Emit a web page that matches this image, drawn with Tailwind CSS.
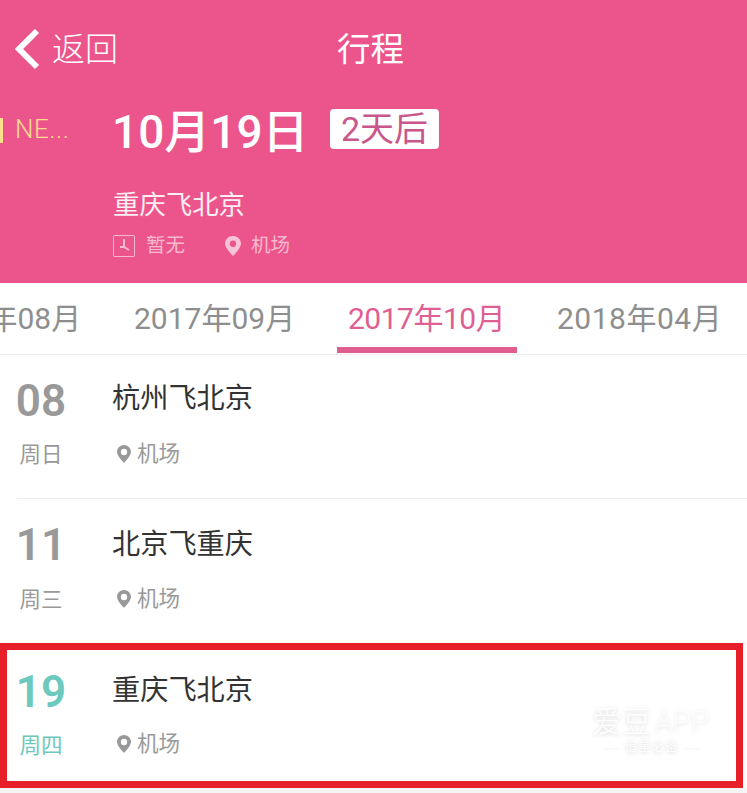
<!DOCTYPE html>
<html lang="zh-CN">

<head>
    <meta charset="UTF-8" />
    <meta name="viewport" content="width=device-width, initial-scale=1.0" />
    <title>行程</title>
    <script src="https://cdn.jsdelivr.net/npm/@tailwindcss/browser@4"></script>
</head>

<body class="relative bg-white h-[793px] w-[747px] overflow-hidden font-['Roboto','Noto_Sans_CJK_SC',sans-serif]">

    <!-- header -->
    <header class="bg-[#ec558b] h-[283px] text-white">
        <div class="relative flex items-center h-[98px]">
            <svg class="ml-[14px] w-[26px] h-[44px]" viewBox="0 0 26 44" fill="none">
                <path d="M23 4 L5 22 L23 40" stroke="white" stroke-width="6" />
            </svg>
            <span class="ml-[12px] mt-[2px] text-[33px] leading-[50px] font-light">返回</span>
            <span class="absolute left-[337px] top-[25px] text-[33.5px] leading-[50px]">行程</span>
        </div>

        <div class="flex items-center h-[64px]">
            <div class="w-[3px] h-[25px] bg-[#fbe08c]"></div>
            <span class="ml-[12px] mt-[-3px] w-[97px] text-[26px] tracking-[0.5px] leading-none text-[#fbdc8f] font-light">NE...</span>
            <span class="mt-[3px] w-[218px] text-[46px] leading-none font-medium whitespace-nowrap">10月19日</span>
            <span class="mt-[-2px] w-[109px] h-[40px] flex items-center justify-center rounded bg-white text-[#c9578b] text-[34px] leading-none">2天后</span>
        </div>

        <div class="ml-[113px] mt-[25px] text-[26.4px] leading-[36px] text-white/90">重庆飞北京</div>

        <div class="ml-[113px] mt-[11px] flex items-center h-[24px] text-[19.5px] leading-none text-white/60">
            <svg class="w-[22px] h-[22px]" viewBox="0 0 22 22" fill="none" stroke="white" stroke-opacity="0.6">
                <rect x="0.5" y="0.5" width="21" height="21" rx="1" />
                <path d="M11 4 V12 M11 12 H7 M11 12 L16 15" stroke-width="2" />
            </svg>
            <span class="ml-[11px]">暂无</span>
            <svg class="ml-[40px] w-[16px] h-[20px]" viewBox="0 0 16 20">
                <path fill="white" fill-opacity="0.65" fill-rule="evenodd" d="M8 0 C3.6 0 0 3.4 0 7.6 C0 12.6 8 20 8 20 C8 20 16 12.6 16 7.6 C16 3.4 12.4 0 8 0 Z M8 4.6 A3.2 3.2 0 1 1 8 11 A3.2 3.2 0 1 1 8 4.6 Z" />
            </svg>
            <span class="ml-[10px]">机场</span>
        </div>
    </header>

    <!-- month tabs -->
    <nav class="relative h-[72px] border-b border-[#eeeeee] text-[30px] leading-none text-[#8e8e8e] whitespace-nowrap">
        <div class="flex items-center h-[70px] ml-[-80px] pt-[2px]">
            <span class="w-[214px]">2017年08月</span>
            <span class="w-[214px]">2017年09月</span>
            <span class="w-[209px] tracking-[-0.5px] text-[#df5f92]">2017年10月</span>
            <span class="tracking-[0.5px]">2018年04月</span>
        </div>
        <div class="absolute left-[337px] top-[64px] w-[180px] h-[6px] bg-[#e05d90]"></div>
    </nav>

    <!-- trip list -->
    <main>
        <div class="h-[143px] flex">
            <div class="w-[82px] text-center text-[#999999]">
                <div class="mt-[21px] text-[44px] leading-[50px] font-semibold">08</div>
                <div class="mt-[14px] text-[21.5px] leading-[30px]">周日</div>
            </div>
            <div class="ml-[30px]">
                <div class="mt-[24px] text-[28.2px] leading-[40px] text-[#333333]">杭州飞北京</div>
                <div class="mt-[20px] ml-[5px] flex items-center h-[30px] text-[21.5px] text-[#999999]">
                    <svg class="w-[14px] h-[18px]" viewBox="0 0 16 20" preserveAspectRatio="none">
                        <path fill="#999999" fill-rule="evenodd" d="M8 0 C3.6 0 0 3.4 0 7.6 C0 12.6 8 20 8 20 C8 20 16 12.6 16 7.6 C16 3.4 12.4 0 8 0 Z M8 4.2 A3.6 3.6 0 1 1 8 11.4 A3.6 3.6 0 1 1 8 4.2 Z" />
                    </svg>
                    <span class="ml-[6px]">机场</span>
                </div>
            </div>
        </div>
        <div class="ml-[17px] h-px bg-[#eeeeee]"></div>

        <div class="h-[145px] flex">
            <div class="w-[82px] text-center text-[#999999]">
                <div class="mt-[21px] text-[44px] leading-[50px] font-semibold">11</div>
                <div class="mt-[15px] text-[21.5px] leading-[30px]">周三</div>
            </div>
            <div class="ml-[30px]">
                <div class="mt-[26px] text-[28.2px] leading-[40px] text-[#333333]">北京飞重庆</div>
                <div class="mt-[19px] ml-[5px] flex items-center h-[30px] text-[21.5px] text-[#999999]">
                    <svg class="w-[14px] h-[18px]" viewBox="0 0 16 20" preserveAspectRatio="none">
                        <path fill="#999999" fill-rule="evenodd" d="M8 0 C3.6 0 0 3.4 0 7.6 C0 12.6 8 20 8 20 C8 20 16 12.6 16 7.6 C16 3.4 12.4 0 8 0 Z M8 4.2 A3.6 3.6 0 1 1 8 11.4 A3.6 3.6 0 1 1 8 4.2 Z" />
                    </svg>
                    <span class="ml-[6px]">机场</span>
                </div>
            </div>
        </div>

        <div class="h-[144px] flex">
            <div class="w-[82px] text-center text-[#6cc9bd]">
                <div class="mt-[23px] text-[44px] leading-[50px] font-semibold">19</div>
                <div class="mt-[14px] text-[21.5px] leading-[30px]">周四</div>
            </div>
            <div class="ml-[30px]">
                <div class="mt-[27px] text-[28.2px] leading-[40px] text-[#333333]">重庆飞北京</div>
                <div class="mt-[18px] ml-[5px] flex items-center h-[30px] text-[21.5px] text-[#999999]">
                    <svg class="w-[14px] h-[18px]" viewBox="0 0 16 20" preserveAspectRatio="none">
                        <path fill="#999999" fill-rule="evenodd" d="M8 0 C3.6 0 0 3.4 0 7.6 C0 12.6 8 20 8 20 C8 20 16 12.6 16 7.6 C16 3.4 12.4 0 8 0 Z M8 4.2 A3.6 3.6 0 1 1 8 11.4 A3.6 3.6 0 1 1 8 4.2 Z" />
                    </svg>
                    <span class="ml-[6px]">机场</span>
                </div>
            </div>
        </div>
        <div class="h-[5px] bg-[#f5f5f5]"></div>
    </main>

    <!-- red annotation frame -->
    <div class="absolute left-0 top-[643px] w-[743px] h-[145px] border-[7.5px] border-[#e71f29]"></div>

    <!-- watermark -->
    <div class="absolute left-[592px] top-[700px] w-[120px] text-white leading-none [text-shadow:0_1px_4px_rgba(0,0,0,0.18)]">
        <div class="flex items-center whitespace-nowrap h-[44px]">
            <span class="text-[30px] font-light">爱豆</span>
            <span class="ml-[3px] text-[30px] font-thin">APP</span>
        </div>
        <div class="flex items-center justify-center mt-[-5px] h-[16px] whitespace-nowrap text-[12px] tracking-[1.5px]">
            <i class="w-[16px] h-px bg-white shadow-sm"></i>
            <span class="mx-[6px]">追星必备</span>
            <i class="w-[16px] h-px bg-white shadow-sm"></i>
        </div>
    </div>

</body>

</html>
